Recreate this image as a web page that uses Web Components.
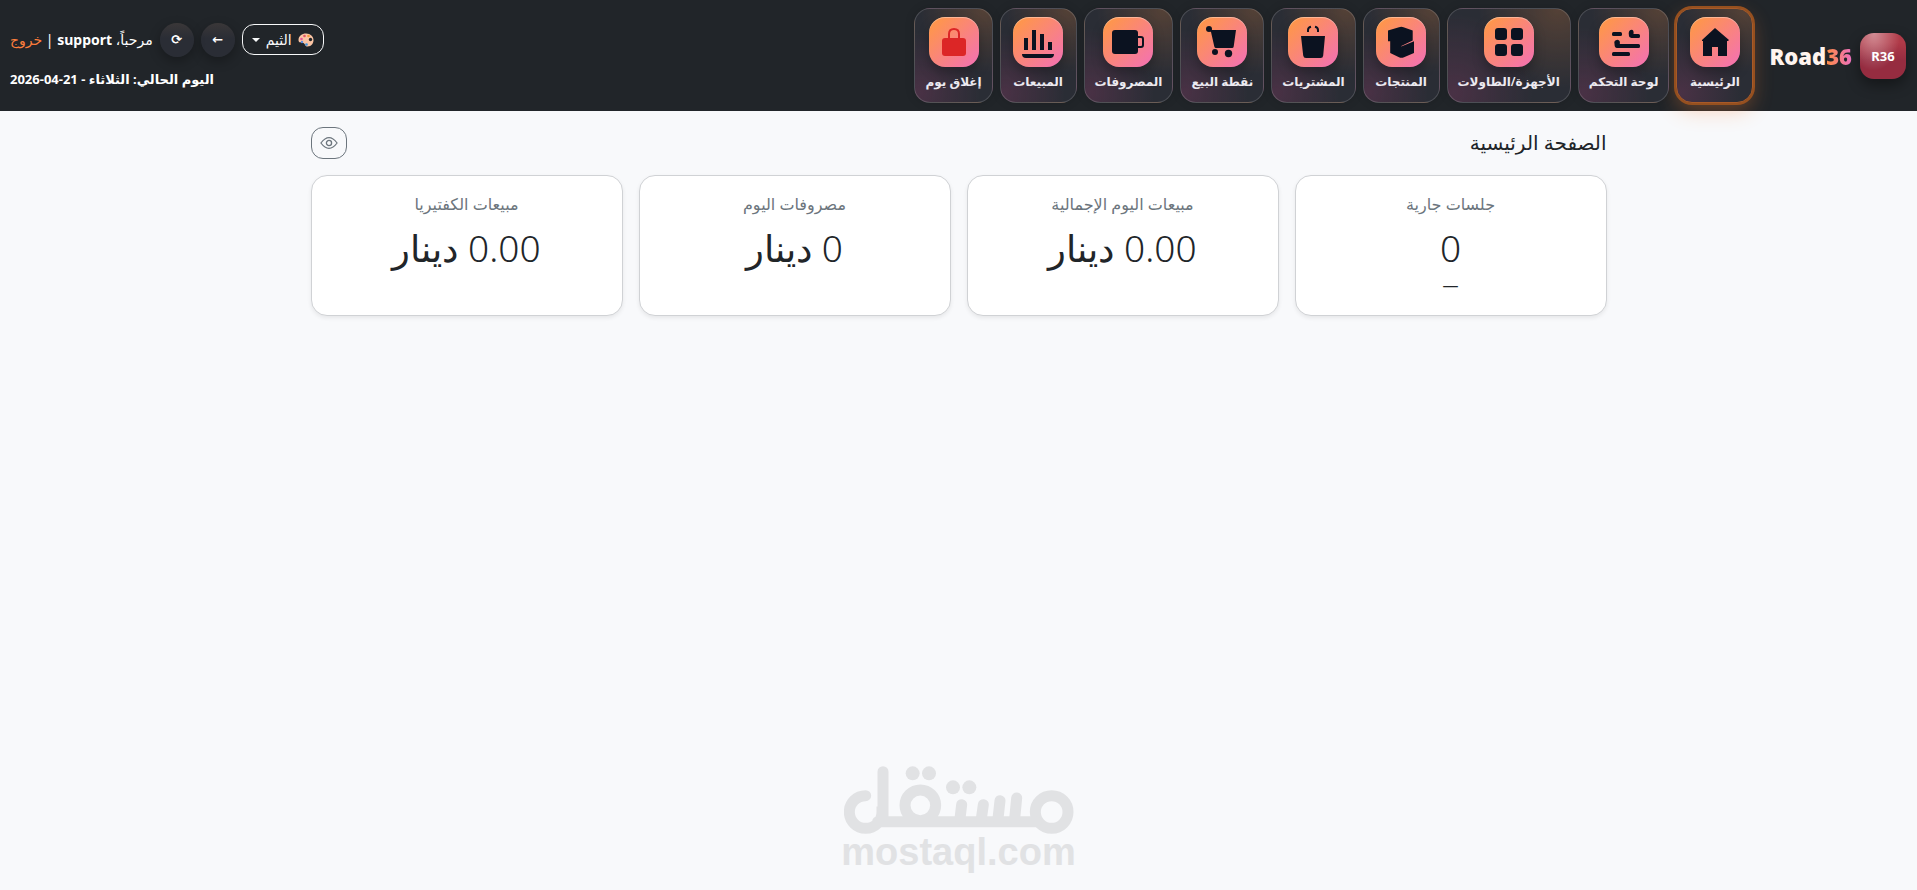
<!DOCTYPE html>
<html lang="ar" dir="rtl">
<head>
<meta charset="utf-8">
<meta name="viewport" content="width=device-width, initial-scale=1">
<title>Road36</title>
<style>
  body {
    margin: 0;
    background: #f8f9fb;
    color: #212529;
    font-family: 'Noto Sans', 'Open Sans', 'DejaVu Sans', sans-serif;
    font-size: 16px;
    line-height: 24px;
  }
</style>
</head>
<body>
<app-page></app-page>

<script>
const icons = {
  home: '<path d="M25 11 L39 23 L38 24 H37 V39 H28 V30 H22 V39 H13 V24 H12 L12 23 Z"/>',
  sliders: '<rect x="13" y="15" width="10" height="4" rx="1.5"/><path d="M30 19 Q28.8 13 32.5 12.8 Q35.2 13 34.5 17 H39.5 Q41 17 41 18.5 V19.5 Q41 21 39.5 21 H34 Q30.5 21 30 19 Z"/><path d="M15.5 27 Q14.5 23 18.5 22.7 Q21.5 23 20.8 27 H39.5 Q41 27 41 28.5 V29.5 Q41 31 39.5 31 H18 Q15.5 31 15.5 27 Z"/><rect x="13" y="35" width="18" height="4" rx="1.5"/>',
  grid: '<rect x="11" y="11" width="12" height="12" rx="3"/><rect x="27" y="11" width="12" height="12" rx="3"/><rect x="11" y="27" width="12" height="12" rx="3"/><rect x="27" y="27" width="12" height="12" rx="3"/>',
  box: '<path d="M12 13.5 L23 10.2 Q25.3 9.5 27.5 10.2 L36.7 13.5 V23.6 L25.3 29 V29.6 L38 24.2 V36 L28 40.2 Q25.3 41.5 23 40.2 L14.2 36 V24.3 H12 Z"/>',
  bag: '<path d="M13 19 H37 L35.2 38.5 Q35 41 32.5 41 H18 Q15.5 41 15.2 38.5 Z"/><path d="M20 15 V13 Q20 10.5 23 9.8 M27 9.8 Q30 10.5 30 13 V15" fill="none" stroke="currentColor" stroke-width="2"/>',
  cart: '<circle cx="12" cy="12" r="3"/><path d="M12 11 L14.5 13 H39 L36.7 29.5 Q36.5 31 35 31 H19 Q17.7 31 17.3 29.5 L14 15 L12 13 Z"/><circle cx="18" cy="35" r="3"/><circle cx="31.5" cy="36.5" r="3.7"/>',
  cup: '<rect x="9" y="13" width="26" height="24" rx="3"/><path d="M35 20 H38 Q40 20 40 22 V28 Q40 30 38 30 H35" fill="none" stroke="currentColor" stroke-width="2"/>',
  chart: '<path d="M11 21 h4 v12 h-4 Z M19 13 h4 v20 h-4 Z M27 17 h4 v16 h-4 Z M35 25 h4 v8 h-4 Z M9 37 H41 Q41 41 37 41 H13 Q9 41 9 37 Z"/>',
  lock: '<rect x="13" y="21" width="24" height="18" rx="3"/><path d="M20 21 V17 Q20 12 25 12 Q30 12 30 17 V21" fill="none" stroke="currentColor" stroke-width="2"/>',
  eye: '<path d="M0.8 8 Q8 -1.5 15.2 8 Q8 17.5 0.8 8 Z" fill="none" stroke="currentColor" stroke-width="1.1"/><circle cx="8" cy="8" r="2.3" fill="none" stroke="currentColor" stroke-width="1.2"/>'
};

function define(name, html, setup) {
  const template = document.createElement('template');
  template.innerHTML = html;
  customElements.define(name, class extends HTMLElement {
    constructor() {
      super();
      this.attachShadow({ mode: 'open' }).appendChild(template.content.cloneNode(true));
    }
    connectedCallback() {
      if (setup) setup(this, this.shadowRoot);
    }
  });
}

define('nav-tile', `
  <style>
    :host { display: block; }
    a {
      display: flex;
      flex-direction: column;
      align-items: center;
      gap: 3px;
      box-sizing: border-box;
      min-width: 77px;
      height: 95px;
      padding: 8px 10px;
      border: 1px solid rgba(255, 255, 255, 0.16);
      border-radius: 16px;
      background:
        radial-gradient(circle at 90% 0, rgba(255, 145, 60, 0.2), transparent 55%),
        radial-gradient(circle at 5% 90%, rgba(236, 72, 153, 0.16), transparent 55%),
        #2a2d35;
      box-shadow: 0 0 10px rgba(0, 0, 0, 0.15);
      color: #eceaf0;
      font-size: 12px;
      font-weight: 600;
      line-height: 24px;
      text-decoration: none;
      white-space: nowrap;
    }
    :host([active]) a {
      border-color: #a85a28;
      box-shadow: 0 0 0 2px #96501f, 0 8px 20px rgba(255, 130, 50, 0.3);
    }
    .icon {
      width: 50px;
      height: 50px;
      border-radius: 16px;
      background: linear-gradient(135deg, #ff9845 5%, #f472b0 95%);
      box-shadow: 0 6px 12px rgba(0, 0, 0, 0.25), inset 0 1px 0 rgba(255, 255, 255, 0.35);
      color: #0b1220;
    }
    :host([danger]) .icon { color: #dc2626; }
    svg { display: block; width: 50px; height: 50px; fill: currentColor; }
  </style>
  <a href="#"><span class="icon"><svg viewBox="0 0 50 50" aria-hidden="true"></svg></span><slot></slot></a>
`, (host, root) => {
  root.querySelector('svg').innerHTML = icons[host.getAttribute('icon')];
  if (host.hasAttribute('active')) root.querySelector('a').setAttribute('aria-current', 'page');
});

define('brand-logo', `
  <style>
    :host { display: block; }
    a { display: flex; align-items: center; gap: 8px; color: inherit; text-decoration: none; }
    .badge {
      display: grid;
      place-items: center;
      width: 46px;
      height: 46px;
      border-radius: 14px;
      background: radial-gradient(ellipse at 30% 0, rgba(255, 255, 255, 0.42), transparent 58%), linear-gradient(#b03a48 20%, #962c40 60%);
      box-shadow: 0 6px 14px rgba(0, 0, 0, 0.4);
      color: #fff;
      font-size: 13px;
      font-weight: 700;
    }
    .name { color: #fff4ee; font-size: 22px; font-weight: 900; line-height: 30px; }
    .name span {
      background: linear-gradient(90deg, #ff8c42, #ec6fc0);
      -webkit-background-clip: text;
      background-clip: text;
      color: transparent;
    }
  </style>
  <a href="#"><span class="badge">R36</span><bdi class="name" dir="ltr">Road<span>36</span></bdi></a>
`);

define('round-button', `
  <style>
    :host { display: block; }
    button {
      display: grid;
      place-items: center;
      width: 34px;
      height: 34px;
      padding: 0;
      border: 0;
      border-radius: 50%;
      background: linear-gradient(#3a3738, #2a2d35 45%);
      box-shadow: 0 4px 12px rgba(0, 0, 0, 0.3);
      color: #fff;
      font: 700 13px/20px 'DejaVu Sans', sans-serif;
    }
  </style>
  <button type="button"><slot></slot></button>
`, (host, root) => root.querySelector('button').setAttribute('aria-label', host.getAttribute('label')));

define('theme-button', `
  <style>
    :host { display: block; }
    button {
      display: flex;
      align-items: center;
      gap: 6px;
      height: 31px;
      padding: 0 9px;
      border: 1px solid #f8f9fa;
      border-radius: 12px;
      background: none;
      color: #f8f9fa;
      font: inherit;
      font-size: 14px;
    }
    svg { width: 16px; height: 14px; }
    i { border: 4px solid transparent; border-top-color: currentColor; border-bottom: 0; }
  </style>
  <button type="button" aria-haspopup="true">
    <svg viewBox="0 0 16 14" aria-hidden="true">
      <path d="M8 0.5 C12.5 0.5 15.5 3.5 15.5 7 C15.5 10 13.5 13.5 9.5 13.5 C6.5 13.5 7.5 10.8 5.5 10 C3.5 9.5 0.5 10 0.5 7 C0.5 3 4 0.5 8 0.5 Z" fill="#fbc4a4"/>
      <circle cx="3.5" cy="6" r="1.3" fill="#e2559b"/><circle cx="6.5" cy="3" r="1.3" fill="#e25563"/>
      <circle cx="10.5" cy="3" r="1.3" fill="#f29a3c"/><circle cx="12.5" cy="6.5" r="1.7" fill="#212529"/>
      <circle cx="8.5" cy="11.5" r="1.3" fill="#3c95e0"/><circle cx="4" cy="9" r="1.2" fill="#5b8de0"/>
    </svg>
    <slot></slot><i></i>
  </button>
`);

define('top-bar', `
  <style>
    :host { display: block; position: relative; z-index: 1; background: #212529; color: #fff; }
    header {
      display: flex;
      align-items: center;
      justify-content: space-between;
      padding: 8px 11px 8px 10px;
    }
    .start { display: flex; align-items: center; gap: 16px; }
    nav { display: flex; gap: 7px; }
    .end { display: flex; flex-direction: column; gap: 12px; font-size: 13px; line-height: 20px; }
    .tools { display: flex; align-items: center; gap: 7px; font-size: 14px; }
    .tools a { color: #fd7e3c; text-decoration: none; }
    .day { font-weight: 700; text-align: left; }
  </style>
  <header>
    <div class="start">
      <brand-logo></brand-logo>
      <nav aria-label="القائمة">
        <nav-tile icon="home" active>الرئيسية</nav-tile>
        <nav-tile icon="sliders">لوحة التحكم</nav-tile>
        <nav-tile icon="grid">الأجهزة/الطاولات</nav-tile>
        <nav-tile icon="box">المنتجات</nav-tile>
        <nav-tile icon="bag">المشتريات</nav-tile>
        <nav-tile icon="cart">نقطة البيع</nav-tile>
        <nav-tile icon="cup">المصروفات</nav-tile>
        <nav-tile icon="chart">المبيعات</nav-tile>
        <nav-tile icon="lock" danger>إغلاق يوم</nav-tile>
      </nav>
    </div>
    <div class="end">
      <div class="tools">
        <theme-button>الثيم</theme-button>
        <round-button label="رجوع">←</round-button>
        <round-button label="تحديث">⟳</round-button>
        <span>مرحباً، <b>support</b> | <a href="#">خروج</a></span>
      </div>
      <div class="day">اليوم الحالي: الثلاثاء - <bdi>2026-04-21</bdi></div>
    </div>
  </header>
`);

define('stat-card', `
  <style>
    :host {
      display: block;
      box-sizing: border-box;
      padding: 16px;
      border: 1px solid #d0d2d5;
      border-radius: 16px;
      background: #fff;
      box-shadow: 0 2px 4px rgba(0, 0, 0, 0.075);
      text-align: center;
    }
    h2 { margin: 0 0 8px; color: #6c757d; font-size: 16px; font-weight: 400; line-height: 24px; }
    .value { font-size: 37px; font-weight: 300; line-height: 48px; }
    .note { font-size: 16px; line-height: 27px; }
  </style>
  <h2><slot name="title"></slot></h2>
  <div class="value"><slot></slot></div>
  <div class="note"><slot name="note"></slot></div>
`);

define('mostaql-mark', `
  <style>
    :host { display: flex; flex-direction: column; align-items: center; color: #e1e2e4; }
    svg { display: block; width: 230px; height: 68px; fill: none; stroke: currentColor; stroke-width: 33; stroke-linecap: round; }
    .dots { fill: currentColor; stroke: none; }
    span { font: 700 38px/36px 'Liberation Sans', sans-serif; }
  </style>
  <svg viewBox="39 47 690 204" aria-hidden="true">
    <circle cx="662" cy="185" r="49"/>
    <circle cx="268" cy="165" r="46"/>
    <path d="M104 136 A49 49 0 1 0 153 185 L156 185 V64 M140 214 H615"/>
    <path d="M557 143 L551 205 M507 151 L501 205 M457 163 L451 205 M392 163 L387 205"/>
    <g class="dots"><circle cx="245" cy="69" r="21"/><circle cx="294" cy="69" r="21"/><circle cx="366" cy="111" r="21"/><circle cx="415" cy="111" r="21"/></g>
  </svg>
  <span dir="ltr">mostaql.com</span>
`);

define('app-page', `
  <style>
    :host { display: flex; flex-direction: column; min-height: 100vh; }
    main { flex: 1; box-sizing: border-box; width: 100%; max-width: 1320px; margin: 0 auto; padding: 16px 12px; }
    .head { display: flex; align-items: center; justify-content: space-between; margin-bottom: 16px; }
    h1 { margin: 0; font-size: 20px; font-weight: 500; line-height: 32px; }
    .head button {
      display: grid;
      place-items: center;
      width: 36px;
      height: 32px;
      padding: 0;
      border: 1px solid #6c757d;
      border-radius: 12px;
      background: none;
      color: #6c757d;
    }
    .head svg { width: 18px; height: 18px; }
    .cards { display: grid; grid-template-columns: repeat(auto-fit, minmax(240px, 1fr)); gap: 16px; }
    footer { padding-bottom: 20px; }
  </style>
  <top-bar></top-bar>
  <main>
    <div class="head">
      <h1>الصفحة الرئيسية</h1>
      <button type="button" aria-label="إظهار"><svg viewBox="0 0 16 16" aria-hidden="true">${icons.eye}</svg></button>
    </div>
    <div class="cards">
      <stat-card><span slot="title">جلسات جارية</span>0<span slot="note">—</span></stat-card>
      <stat-card><span slot="title">مبيعات اليوم الإجمالية</span>0.00 دينار</stat-card>
      <stat-card><span slot="title">مصروفات اليوم</span>0 دينار</stat-card>
      <stat-card><span slot="title">مبيعات الكفتيريا</span>0.00 دينار</stat-card>
    </div>
  </main>
  <footer><mostaql-mark></mostaql-mark></footer>
`);
</script>
</body>
</html>
